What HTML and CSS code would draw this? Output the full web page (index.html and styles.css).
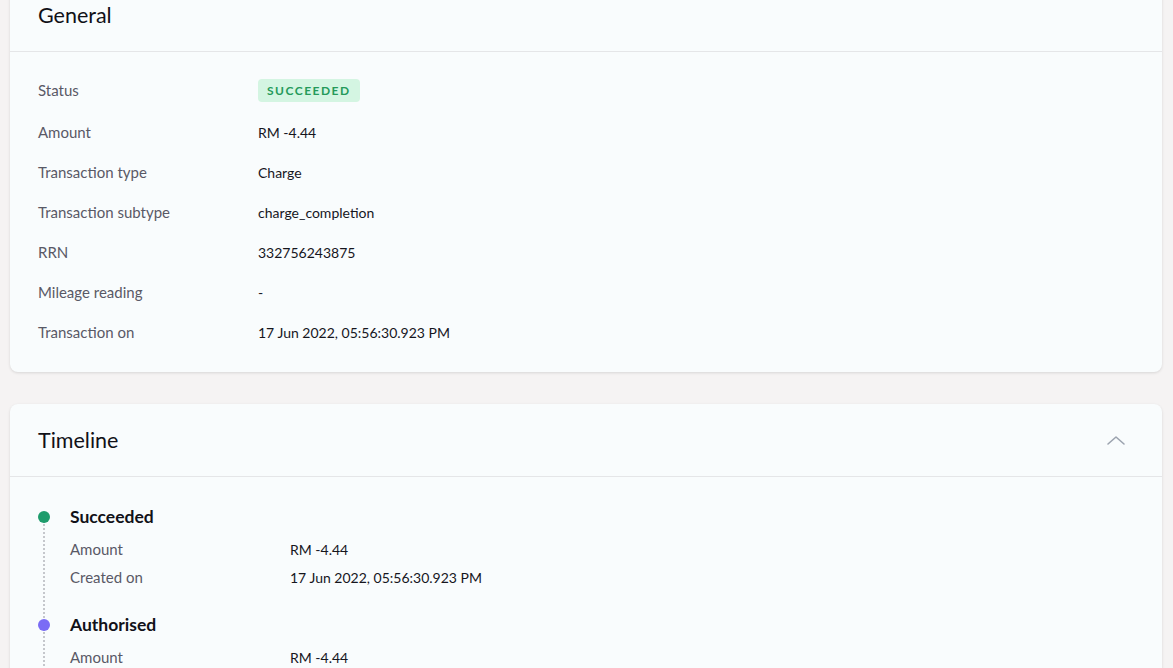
FILE: index.html
```html
<!DOCTYPE html>
<html lang="en">
<head>
  <meta charset="UTF-8">
  <title>Transaction details</title>
  <link rel="stylesheet" href="styles.css">
</head>
<body>

  <div class="page">

    <section class="card card-general">
      <div class="card-head">
        <h2>General</h2>
      </div>
      <div class="card-body">
        <div class="row row-status">
          <span class="label">Status</span>
          <span class="value"><span class="badge">SUCCEEDED</span></span>
        </div>
        <div class="row">
          <span class="label">Amount</span>
          <span class="value">RM -4.44</span>
        </div>
        <div class="row">
          <span class="label">Transaction type</span>
          <span class="value">Charge</span>
        </div>
        <div class="row">
          <span class="label">Transaction subtype</span>
          <span class="value">charge_completion</span>
        </div>
        <div class="row">
          <span class="label">RRN</span>
          <span class="value">332756243875</span>
        </div>
        <div class="row">
          <span class="label">Mileage reading</span>
          <span class="value">-</span>
        </div>
        <div class="row">
          <span class="label">Transaction on</span>
          <span class="value">17 Jun 2022, 05:56:30.923 PM</span>
        </div>
      </div>
    </section>

    <section class="card">
      <div class="card-head">
        <h2>Timeline</h2>
        <svg class="chevron" width="20" height="12" viewBox="0 0 20 12" fill="none">
          <path d="M2 10 L10 3 L18 10" stroke="#9ca3af" stroke-width="1.6" stroke-linecap="round" stroke-linejoin="round"/>
        </svg>
      </div>
      <div class="card-body timeline">
        <div class="event">
          <span class="dot dot-green"></span>
          <h3>Succeeded</h3>
          <div class="event-row">
            <span class="label">Amount</span>
            <span class="value">RM -4.44</span>
          </div>
          <div class="event-row">
            <span class="label">Created on</span>
            <span class="value">17 Jun 2022, 05:56:30.923 PM</span>
          </div>
        </div>
        <div class="event">
          <span class="dot dot-purple"></span>
          <h3>Authorised</h3>
          <div class="event-row">
            <span class="label">Amount</span>
            <span class="value">RM -4.44</span>
          </div>
          <div class="event-row">
            <span class="label">Created on</span>
            <span class="value">17 Jun 2022, 05:56:29.101 PM</span>
          </div>
        </div>
      </div>
    </section>

  </div>

</body>
</html>
```

FILE: styles.css
```css
body {
  font-family: 'Lato', 'Noto Sans', sans-serif;
  background: #f5f3f3;
  color: #16161d;
  margin: 0;
  overflow: hidden;
}

.page {
  padding: 0 11px 0 10px;
}

.card {
  background: #f9fcfd;
  border-radius: 8px;
  box-shadow: 0 1px 3px rgba(0, 0, 0, 0.12);
  margin-bottom: 32px;
}

.card-general {
  margin-top: -21px;
}

.card-head {
  display: flex;
  align-items: center;
  justify-content: space-between;
  height: 72px;
  padding: 0 36px 0 28px;
  border-bottom: 1px solid #e5e6e8;
}

h2 {
  margin: 0;
  font-size: 21.5px;
  font-weight: 400;
  color: #111118;
}

.card-body {
  padding: 20px 28px 20px;
}

.row {
  display: flex;
  align-items: center;
  height: 40px;
  font-size: 14px;
}

.row-status {
  height: 36px;
  margin-bottom: 4px;
}

.label {
  width: 220px;
  font-size: 15px;
  color: #595966;
}

.value {
  color: #16161d;
}

.badge {
  display: inline-block;
  background: #d4f5e2;
  color: #259a5a;
  font-size: 12px;
  font-weight: 700;
  letter-spacing: 1.5px;
  line-height: 23px;
  padding: 0 9px;
  border-radius: 4px;
}

.timeline {
  padding: 30px 28px 0;
}

.event {
  position: relative;
  padding-left: 32px;
  padding-bottom: 24px;
}

.event::before {
  content: '';
  position: absolute;
  left: 5px;
  top: 14px;
  bottom: -10px;
  border-left: 2px dotted #c5c7cc;
}

.dot {
  position: absolute;
  left: 0;
  top: 4px;
  width: 12px;
  height: 12px;
  border-radius: 50%;
  z-index: 1;
}

.dot-green {
  background: #1e9c6c;
}

.dot-purple {
  background: #7a6cf5;
}

h3 {
  margin: 0 0 8px;
  font-size: 17.5px;
  font-weight: 700;
  line-height: 20px;
  color: #111118;
}

.event-row {
  display: flex;
  height: 28px;
  align-items: center;
  font-size: 14px;
}
```
